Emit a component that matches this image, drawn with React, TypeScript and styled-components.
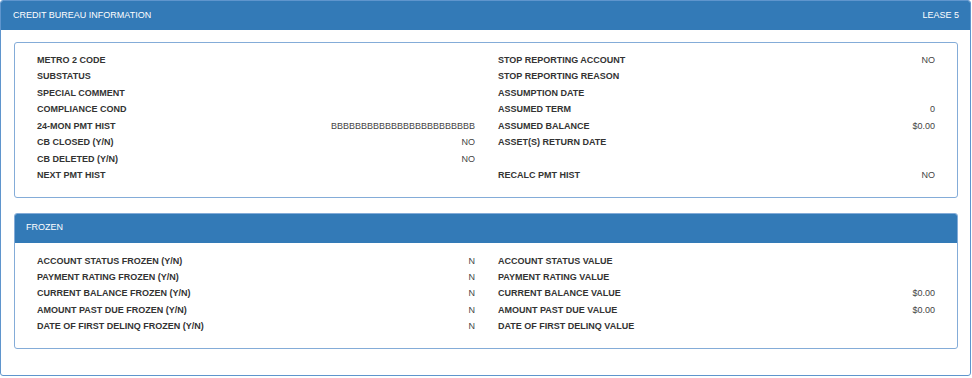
import React from "react";
import styled, { createGlobalStyle } from "styled-components";

type Field = { label: string; value?: string };

const creditLeft: Field[] = [
  { label: "METRO 2 CODE" },
  { label: "SUBSTATUS" },
  { label: "SPECIAL COMMENT" },
  { label: "COMPLIANCE COND" },
  { label: "24-MON PMT HIST", value: "BBBBBBBBBBBBBBBBBBBBBBBB" },
  { label: "CB CLOSED (Y/N)", value: "NO" },
  { label: "CB DELETED (Y/N)", value: "NO" },
  { label: "NEXT PMT HIST" },
];

const creditRight: Field[] = [
  { label: "STOP REPORTING ACCOUNT", value: "NO" },
  { label: "STOP REPORTING REASON" },
  { label: "ASSUMPTION DATE" },
  { label: "ASSUMED TERM", value: "0" },
  { label: "ASSUMED BALANCE", value: "$0.00" },
  { label: "ASSET(S) RETURN DATE" },
  { label: "" },
  { label: "RECALC PMT HIST", value: "NO" },
];

const frozenLeft: Field[] = [
  { label: "ACCOUNT STATUS FROZEN (Y/N)", value: "N" },
  { label: "PAYMENT RATING FROZEN (Y/N)", value: "N" },
  { label: "CURRENT BALANCE FROZEN (Y/N)", value: "N" },
  { label: "AMOUNT PAST DUE FROZEN (Y/N)", value: "N" },
  { label: "DATE OF FIRST DELINQ FROZEN (Y/N)", value: "N" },
];

const frozenRight: Field[] = [
  { label: "ACCOUNT STATUS VALUE" },
  { label: "PAYMENT RATING VALUE" },
  { label: "CURRENT BALANCE VALUE", value: "$0.00" },
  { label: "AMOUNT PAST DUE VALUE", value: "$0.00" },
  { label: "DATE OF FIRST DELINQ VALUE" },
];

function FieldList({ fields }: { fields: Field[] }) {
  return (
    <StyledList>
      {fields.map((f, i) => (
        <StyledRow key={i}>
          <span className="label">{f.label}</span>
          <span className="value">{f.value}</span>
        </StyledRow>
      ))}
    </StyledList>
  );
}

export default function App() {
  return (
    <>
      <GlobalStyle />
      <StyledPanel>
        <StyledHeading $padLeft={12}>
          <span>CREDIT BUREAU INFORMATION</span>
          <span>LEASE 5</span>
        </StyledHeading>
        <StyledBody>
          <StyledInner>
            <StyledGrid $padTop={9}>
              <FieldList fields={creditLeft} />
              <FieldList fields={creditRight} />
            </StyledGrid>
          </StyledInner>

          <StyledInner $gap>
            <StyledHeading $padLeft={11}>
              <span>FROZEN</span>
            </StyledHeading>
            <StyledGrid $padTop={10}>
              <FieldList fields={frozenLeft} />
              <FieldList fields={frozenRight} />
            </StyledGrid>
          </StyledInner>
        </StyledBody>
      </StyledPanel>
    </>
  );
}

const GlobalStyle = createGlobalStyle`
  body {
    margin: 0;
    background: #fff;
    font-family: "Liberation Sans", Arial, sans-serif;
    color: #333;
  }
`;

const StyledPanel = styled.div`
  width: 971px;
  box-sizing: border-box;
  border: 1px solid #5f95cd;
  border-radius: 3px;
  overflow: hidden;
`;

const StyledHeading = styled.div<{ $padLeft: number }>`
  background: #337ab7;
  color: #fff;
  font-size: 9px;
  height: 29px;
  display: flex;
  align-items: center;
  justify-content: space-between;
  padding: 0 11px 2px ${(p) => p.$padLeft}px;
  box-sizing: border-box;
`;

const StyledBody = styled.div`
  padding: 12px 12px 26px 13px;
`;

const StyledInner = styled.div<{ $gap?: boolean }>`
  border: 1px solid #84acd8;
  border-radius: 3px;
  overflow: hidden;
  margin-top: ${(p) => (p.$gap ? 15 : 0)}px;
`;

const StyledGrid = styled.div<{ $padTop: number }>`
  display: grid;
  grid-template-columns: 438px 1fr;
  column-gap: 23px;
  padding: ${(p) => p.$padTop}px 22px 13px 22px;
`;

const StyledList = styled.div`
  display: flex;
  flex-direction: column;
`;

const StyledRow = styled.div`
  display: flex;
  justify-content: space-between;
  height: 16.45px;
  line-height: 16.45px;
  font-size: 9px;
  white-space: nowrap;

  .label {
    font-weight: bold;
    color: #333;
  }
  .value {
    color: #444;
  }
`;
